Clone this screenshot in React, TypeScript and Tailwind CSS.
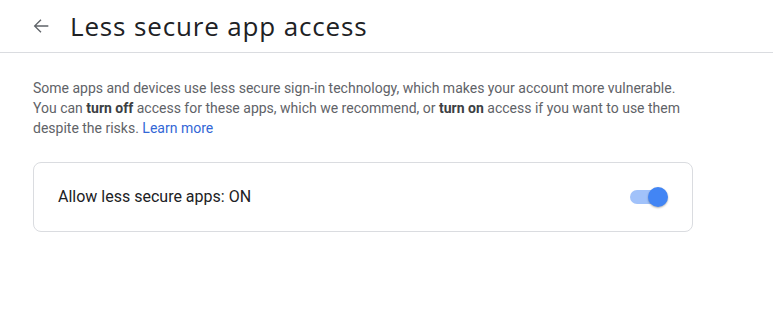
export default function App() {
  return (
    <div className="w-[773px] h-[326px] bg-white font-['Roboto','Liberation_Sans',sans-serif] overflow-hidden">
      <div className="h-[53px] border-b border-[#dadce0] flex items-center pl-[30px]">
        <button className="w-[22px] h-[22px] flex items-center justify-center text-[#5f6368]">
          <svg width="22" height="22" viewBox="0 0 24 24" fill="currentColor">
            <path d="M20 11.25H6.9l5.6-5.6L11.45 4.6 4.05 12l7.4 7.4 1.05-1.05-5.6-5.6H20v-1.5z" />
          </svg>
        </button>
        <h1 className="ml-[18px] text-[26px] leading-none text-[#202124] font-['Open_Sans','Roboto',sans-serif] tracking-[0.85px]">
          Less secure app access
        </h1>
      </div>
      <div className="pl-[33px] pt-[25px] w-[693px]">
        <p className="text-[14px] leading-[20px] text-[#5f6368]">
          Some apps and devices use less secure sign-in technology, which makes your account more vulnerable.
          You can <b className="font-bold text-[#3c4043]">turn off</b> access for these apps, which we recommend, or{" "}
          <b className="font-bold text-[#3c4043]">turn on</b> access if you want to use them despite the risks.{" "}
          <a className="text-[#3367d6]">Learn more</a>
        </p>
        <div className="mt-[24px] h-[70px] border border-[#dadce0] rounded-lg flex items-center justify-between pl-[24px] pr-[26px]">
          <span className="text-[16px] text-[#202124]">Allow less secure apps: ON</span>
          <div className="relative w-[36px] h-[14px] rounded-full bg-[#a1c2fa]">
            <div className="absolute right-[-2px] top-1/2 -translate-y-1/2 w-5 h-5 rounded-full bg-[#4285f4] shadow-[0_1px_2px_rgba(0,0,0,0.3)]" />
          </div>
        </div>
      </div>
    </div>
  );
}
